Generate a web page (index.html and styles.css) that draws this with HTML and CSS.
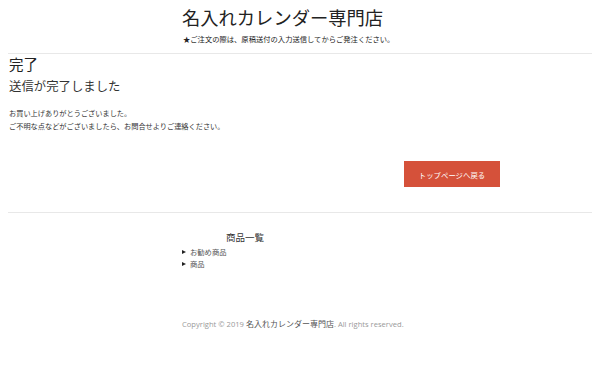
FILE: index.html
```html
<!DOCTYPE html>
<html lang="ja">
<head>
  <meta charset="UTF-8" />
  <meta name="viewport" content="width=device-width, initial-scale=1.0"/>
  <title>完了 | 名入れカレンダー専門店</title>
  <link rel="stylesheet" href="styles.css">
</head>
<body>
  <div class="header">
    <h1 class="site-title">名入れカレンダー専門店</h1>
    <p class="notice">★ご注文の際は、原稿送付の入力送信してからご発注ください。</p>
  </div>

  <div class="content">
    <h2 class="page-title">完了</h2>
    <h3 class="sub-title">送信が完了しました</h3>
    <p class="message">お買い上げありがとうございました。<br>ご不明な点などがございましたら、お問合せよりご連絡ください。</p>

    <div class="btn-row">
      <a class="btn-top" href="#">トップページへ戻る</a>
    </div>
  </div>

  <div class="footer">
    <div class="footer-inner">
      <div class="product-nav">
        <h4>商品一覧</h4>
        <ul>
          <li>お勧め商品</li>
          <li>商品</li>
        </ul>
      </div>
      <p class="copyright">Copyright © 2019 <span class="copy-name">名入れカレンダー専門店</span>. All rights reserved.</p>
    </div>
  </div>
</body>
</html>
```

FILE: styles.css
```css
body {
  font-family: "Noto Sans CJK JP", "Noto Sans", sans-serif;
  background-color: #fff;
  color: #333;
  margin: 0;
  padding: 0;
}

.header {
  width: 236px;
  margin: 0 auto;
  padding-top: 4px;
  padding-bottom: 8px;
}

.site-title {
  font-size: 18.3px;
  font-weight: 400;
  line-height: 26px;
  margin: 0;
  color: #222;
}

.notice {
  font-size: 7.3px;
  line-height: 12px;
  margin: 3px 0 0 1px;
  color: #222;
}

.content {
  margin: 0 8px;
  border-top: 1px solid #e8e8e8;
  border-bottom: 1px solid #e8e8e8;
  padding: 0 1px 25px;
}

.page-title {
  font-size: 14.5px;
  font-weight: 400;
  line-height: 20px;
  margin: 0;
  color: #222;
}

.sub-title {
  font-size: 12.4px;
  font-weight: 400;
  line-height: 20px;
  margin: 2px 0 0;
  color: #333;
}

.message {
  font-size: 7.2px;
  line-height: 13px;
  margin: 11px 0 0;
  color: #333;
}

.btn-row {
  display: flex;
  justify-content: flex-end;
  padding-right: 91px;
  margin-top: 28px;
}

.btn-top {
  display: flex;
  align-items: center;
  justify-content: center;
  width: 96px;
  height: 26px;
  background-color: #d5513a;
  color: #fff;
  font-size: 7.4px;
  text-decoration: none;
}

.footer-inner {
  width: 236px;
  margin: 0 auto;
  padding-top: 17px;
}

.product-nav {
  width: 126px;
}

.product-nav h4 {
  font-size: 9.5px;
  font-weight: 400;
  line-height: 14px;
  text-align: center;
  margin: 0;
  color: #333;
}

.product-nav ul {
  list-style: none;
  margin: 2px 0 0;
  padding: 0;
}

.product-nav li {
  font-size: 7.3px;
  line-height: 12px;
  color: #555;
  display: flex;
  align-items: center;
}

.product-nav li::before {
  content: "";
  border-left: 4px solid #222;
  border-top: 2.5px solid transparent;
  border-bottom: 2.5px solid transparent;
  margin-right: 4px;
}

.copyright {
  font-family: "Open Sans", "Noto Sans CJK JP", sans-serif;
  font-size: 7.6px;
  line-height: 12px;
  color: #999;
  margin: 48px 0 0;
}

.copy-name {
  font-family: "Noto Sans CJK JP", sans-serif;
  font-size: 8px;
  color: #555;
}
```
